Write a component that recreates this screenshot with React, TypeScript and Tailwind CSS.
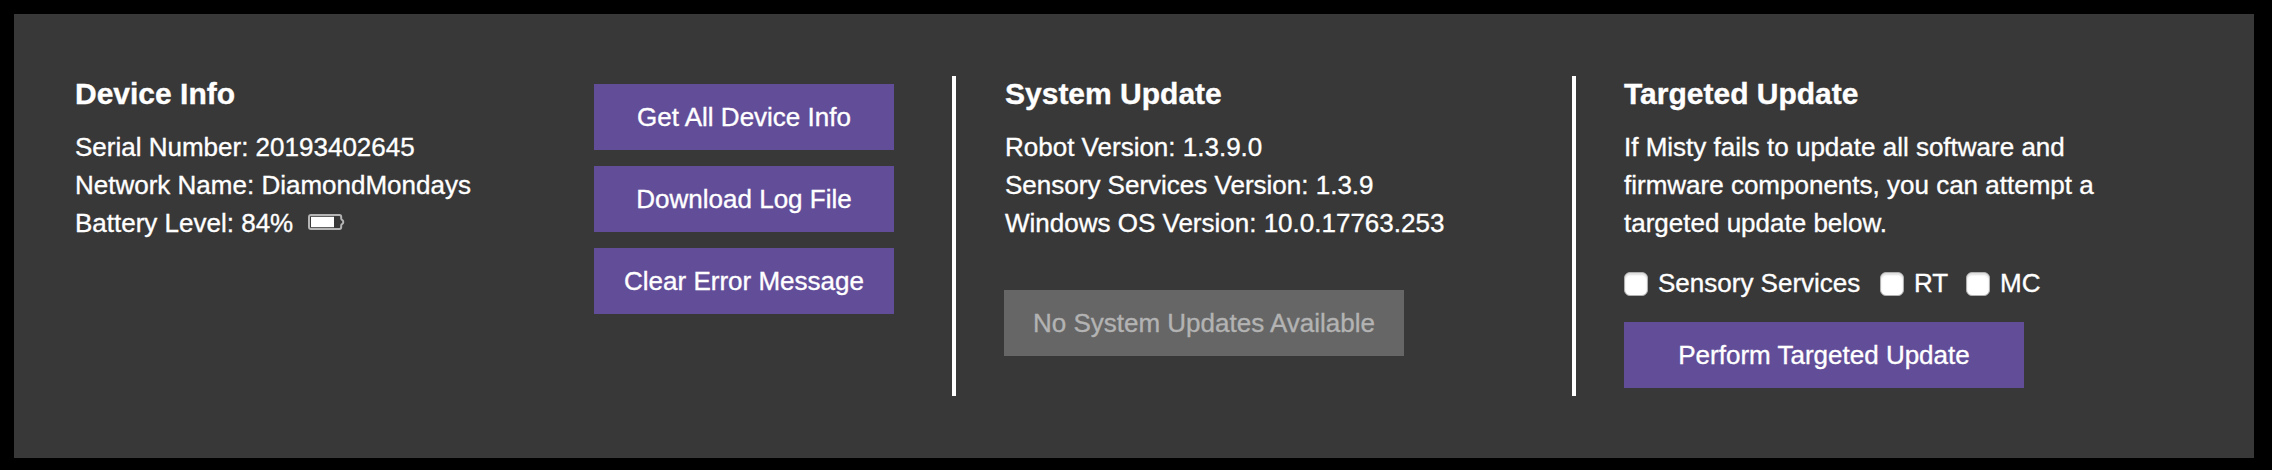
import type { ReactNode } from "react";

function Heading({ children }: { children: ReactNode }) {
  return <h2 className="mb-4 text-[30px] leading-9 font-bold">{children}</h2>;
}

function Button({ children, wide, disabled }: { children: ReactNode; wide?: boolean; disabled?: boolean }) {
  return (
    <button
      type="button"
      disabled={disabled}
      className={`h-[66px] text-center whitespace-nowrap ${wide ? "w-[400px]" : "w-[300px]"} ${
        disabled ? "bg-[#666666] text-[#b3b3b3]" : "bg-[#624d99] text-white"
      }`}
    >
      {children}
    </button>
  );
}

function Check({ label, className }: { label: string; className: string }) {
  return (
    <label className={`flex items-center whitespace-nowrap ${className}`}>
      <input
        type="checkbox"
        className="mt-[2px] mr-[10px] size-6 shrink-0 appearance-none rounded-[6px] border border-[#b0b0b0] bg-white shadow-[inset_0_2px_2px_#dedede]"
      />
      {label}
    </label>
  );
}

function Battery() {
  return (
    <svg width="37" height="16" viewBox="0 0 37 16" className="-mt-[2px] ml-[15px]" aria-hidden="true">
      <path
        d="M3 1H31.5Q33.2 1 33.2 3V4.6Q33.2 5.4 34 5.8Q35.3 6.6 35.3 8T34 10.2Q33.2 10.6 33.2 11.4V13Q33.2 15 31.5 15H3Q1 15 1 13V3Q1 1 3 1Z"
        fill="none"
        stroke="#b5b5b5"
        strokeWidth="2"
      />
      <rect x="3" y="2.8" width="23" height="10.4" fill="#fff" />
    </svg>
  );
}

export default function App() {
  return (
    <div className="h-[470px] w-[2272px] bg-black pt-[14px] pl-[14px] font-['Liberation_Sans',Arial,sans-serif] text-[26px] leading-[38px] text-white [-webkit-text-stroke:0.35px_currentColor]">
      <main className="flex h-[444px] w-[2240px] items-start bg-[#383838] pt-[62px] pl-[61px]">
        <section className="flex h-80 w-[881px] border-r-4 border-white">
          <div className="w-[519px] shrink-0">
            <Heading>Device Info</Heading>
            <p>Serial Number: 20193402645</p>
            <p>Network Name: DiamondMondays</p>
            <p className="flex items-center">
              Battery Level: 84%
              <Battery />
            </p>
          </div>
          <div className="flex flex-col gap-4 pt-2">
            <Button>Get All Device Info</Button>
            <Button>Download Log File</Button>
            <Button>Clear Error Message</Button>
          </div>
        </section>
        <section className="h-80 w-[620px] border-r-4 border-white pl-12">
          <div className="mb-12 pl-px">
            <Heading>System Update</Heading>
            <p>Robot Version: 1.3.9.0</p>
            <p>Sensory Services Version: 1.3.9</p>
            <p>Windows OS Version: 10.0.17763.253</p>
          </div>
          <Button wide disabled>
            No System Updates Available
          </Button>
        </section>
        <section className="h-80 pl-12">
          <Heading>Targeted Update</Heading>
          <p className="mb-[22px] w-[500px]">
            If Misty fails to update all software and firmware components, you can attempt a targeted update below.
          </p>
          <div className="mb-5 flex">
            <Check label="Sensory Services" className="w-64" />
            <Check label="RT" className="w-[86px]" />
            <Check label="MC" className="w-20" />
          </div>
          <Button wide>Perform Targeted Update</Button>
        </section>
      </main>
    </div>
  );
}
